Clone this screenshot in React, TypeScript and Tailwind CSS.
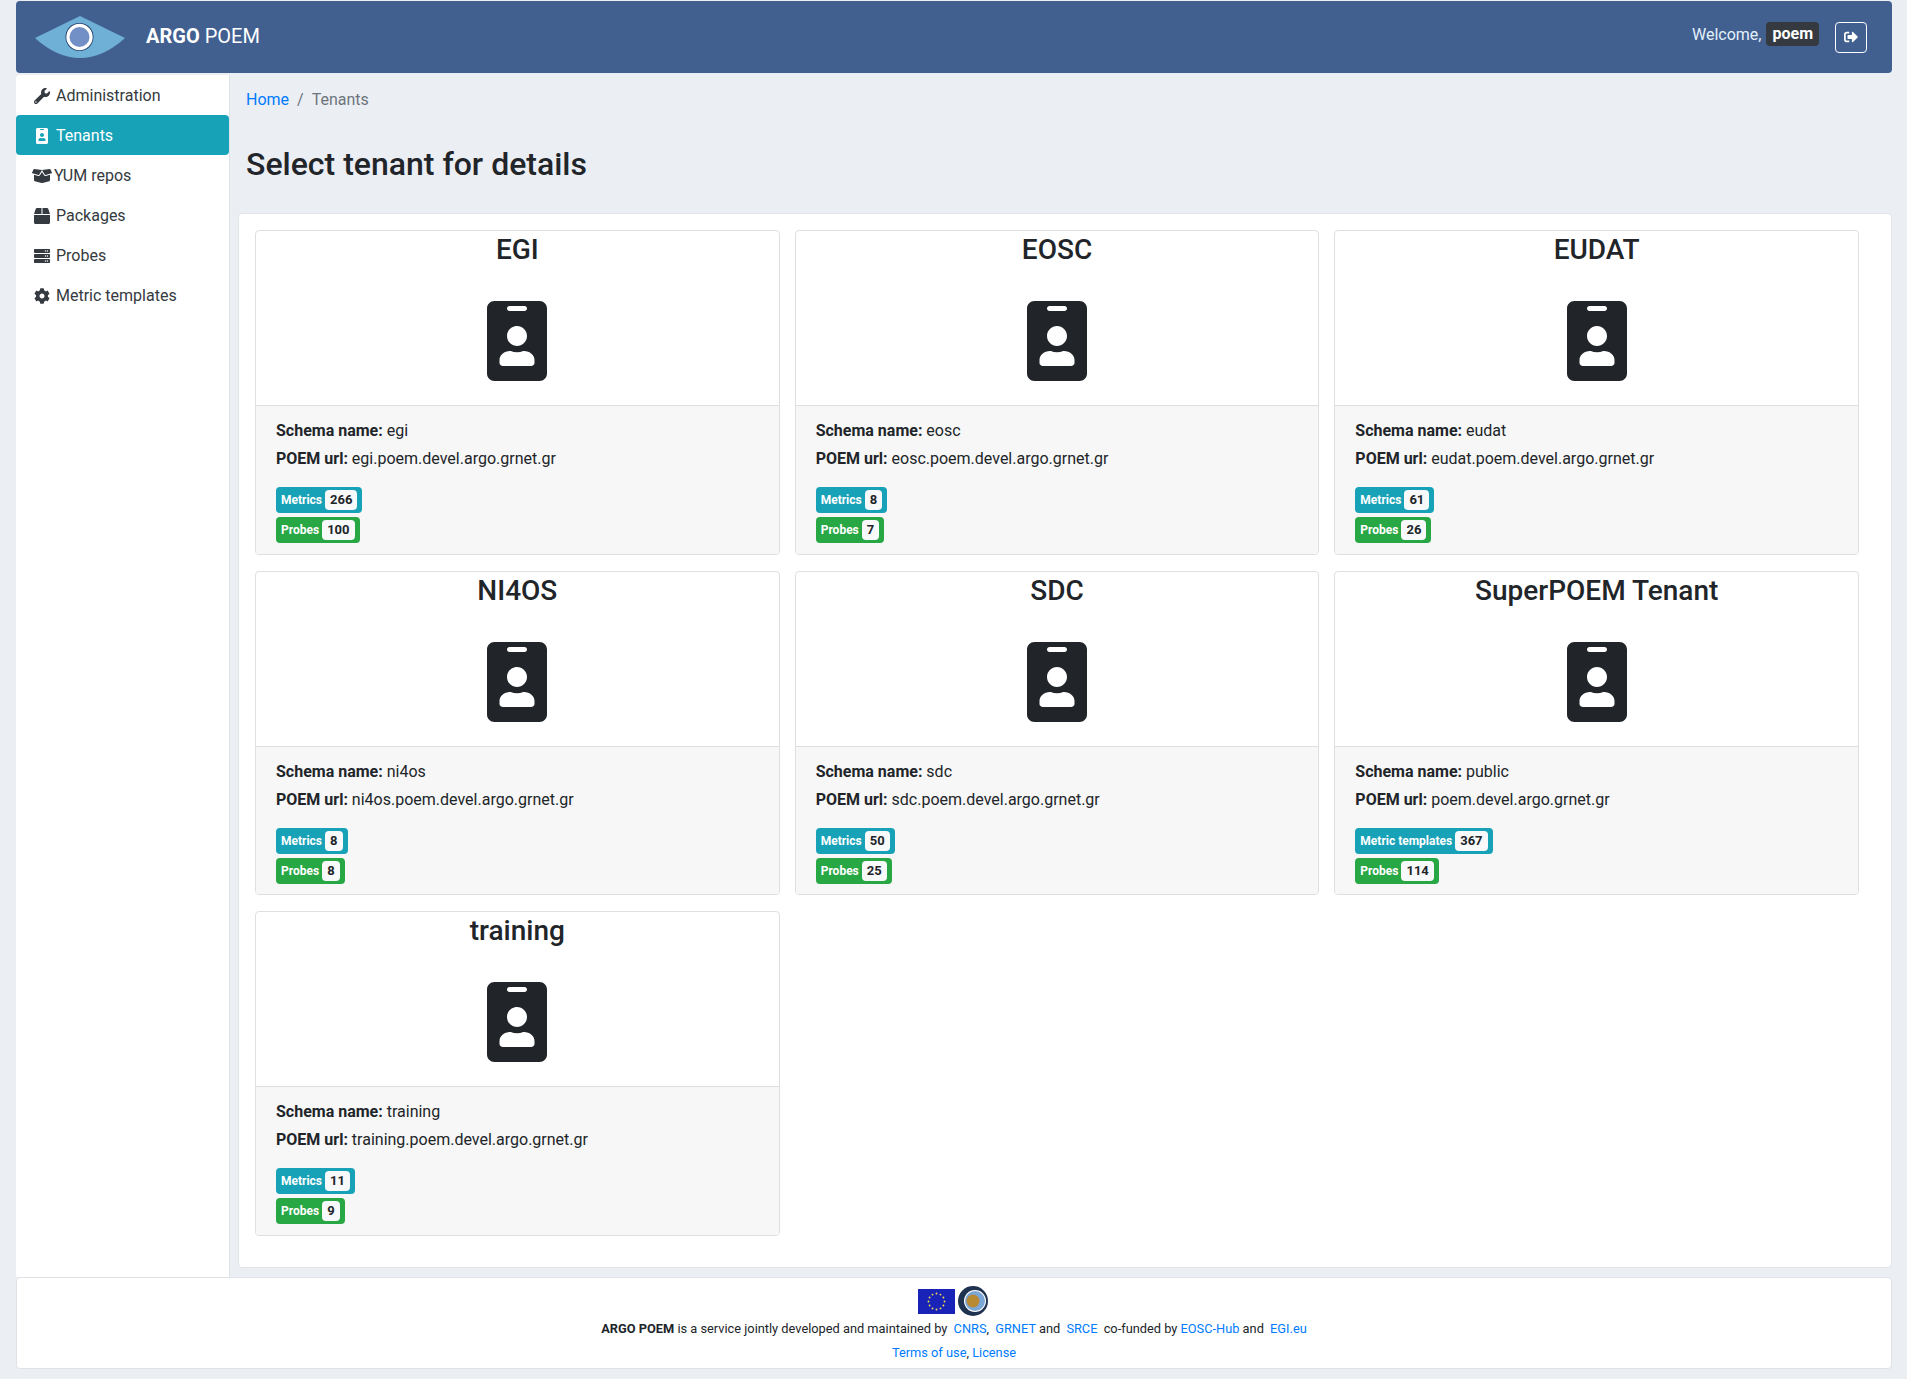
import React from 'react';
import { FaWrench, FaIdBadge, FaBoxOpen, FaBox, FaServer, FaCog, FaSignOutAlt } from 'react-icons/fa';

const navItems = [
  { label: 'Administration', icon: <FaWrench className="w-4 h-4" />, wide: false },
  { label: 'Tenants', icon: <FaIdBadge className="w-4 h-4" />, wide: false, active: true },
  { label: 'YUM repos', icon: <FaBoxOpen className="w-5 h-4" />, wide: true },
  { label: 'Packages', icon: <FaBox className="w-4 h-4" />, wide: false },
  { label: 'Probes', icon: <FaServer className="w-4 h-4" />, wide: false },
  { label: 'Metric templates', icon: <FaCog className="w-4 h-4" />, wide: false },
];

const tenants = [
  { name: 'EGI', schema: 'egi', url: 'egi.poem.devel.argo.grnet.gr', metrics: 266, probes: 100 },
  { name: 'EOSC', schema: 'eosc', url: 'eosc.poem.devel.argo.grnet.gr', metrics: 8, probes: 7 },
  { name: 'EUDAT', schema: 'eudat', url: 'eudat.poem.devel.argo.grnet.gr', metrics: 61, probes: 26 },
  { name: 'NI4OS', schema: 'ni4os', url: 'ni4os.poem.devel.argo.grnet.gr', metrics: 8, probes: 8 },
  { name: 'SDC', schema: 'sdc', url: 'sdc.poem.devel.argo.grnet.gr', metrics: 50, probes: 25 },
  { name: 'SuperPOEM Tenant', schema: 'public', url: 'poem.devel.argo.grnet.gr', metrics: 367, probes: 114, metricLabel: 'Metric templates' },
  { name: 'training', schema: 'training', url: 'training.poem.devel.argo.grnet.gr', metrics: 11, probes: 9 },
];

const Logo = () => (
  <svg width="90" height="42" viewBox="0 0 90 42" className="shrink-0">
    <path d="M0 22 L45 0 L90 22 Q68 42 45 42 Q22 42 0 22 Z" fill="#6fb0d6" />
    <circle cx="44.5" cy="21" r="14" fill="#1f3a66" />
    <circle cx="44.5" cy="21" r="13.2" fill="#ffffff" />
    <circle cx="44.5" cy="21" r="10" fill="#7390c6" />
  </svg>
);

const Badge = ({ label, value, color }: { label: string; value: number; color: string }) => (
  <span className={`inline-flex items-center h-[26px] rounded-[4px] px-[5px] text-[12px] font-bold text-white ${color}`}>
    {label}
    <span className="ml-[3px] inline-flex items-center h-5 rounded-[4px] bg-[#f8f9fa] px-[5px] text-[13px] text-[#212529]">{value}</span>
  </span>
);

const TenantCard = ({ t }: { t: (typeof tenants)[number] }) => (
  <div className="flex flex-col rounded-[4px] border border-[#dfdfdf] bg-white overflow-hidden">
    <div className="h-[175px] flex flex-col items-center border-b border-[#dfdfdf]">
      <h3 className="mt-[2px] text-[28px] leading-[34px] font-medium text-[#212529]">{t.name}</h3>
      <FaIdBadge className="mt-[34px] w-[60px] h-[80px] text-[#212529]" />
    </div>
    <div className="bg-[#f7f7f7] h-[147.5px] pt-[13px] px-5 text-[#212529]">
      <p className="leading-6"><b className="font-bold">Schema name:</b> {t.schema}</p>
      <p className="leading-6 mt-1"><b className="font-bold">POEM url:</b> {t.url}</p>
      <div className="mt-4 flex flex-col items-start gap-1">
        <Badge label={t.metricLabel ?? 'Metrics'} value={t.metrics} color="bg-[#17a2b8]" />
        <Badge label="Probes" value={t.probes} color="bg-[#28a745]" />
      </div>
    </div>
  </div>
);

export default function App() {
  return (
    <div className="min-h-[1379px] bg-[#ebeef3] pt-px pl-4 pr-[15px] font-[Roboto,sans-serif] text-base text-[#212529]">
      {/* Header */}
      <div className="h-[72px] bg-[#416090] rounded-[4px] flex items-center justify-between pl-[19px] pr-[25px]">
        <div className="flex items-center">
          <Logo />
          <span className="ml-[21px] -mt-[2px] text-[20px] text-white"><span className="font-bold">ARGO</span> POEM</span>
        </div>
        <div className="flex items-start">
          <span className="text-[#e3f0fb] mr-[5px] pt-px leading-6">Welcome,</span>
          <span className="h-6 rounded-[4px] bg-[#343a40] px-[6px] flex items-center font-bold text-white">poem</span>
          <button className="ml-4 w-8 h-[31px] rounded-[4px] border border-white flex items-center justify-center text-white">
            <FaSignOutAlt className="w-[14px] h-[14px]" />
          </button>
        </div>
      </div>

      <div className="flex mt-[2px]">
        {/* Sidebar */}
        <div className="w-[214px] shrink-0 bg-white rounded-tl-[4px] border-r border-[#dfe2e6] h-[1202px]">
          {navItems.map((n) => (
            <div
              key={n.label}
              className={`h-10 pt-[2px] flex items-center rounded-[4px] ${n.wide ? 'pl-4 gap-[2px]' : 'pl-[18px] gap-[6px]'} ${n.active ? 'bg-[#17a2b8] text-white' : 'text-[#343a40]'}`}
            >
              {n.icon}
              <span>{n.label}</span>
            </div>
          ))}
        </div>

        {/* Main */}
        <div className="flex-1 pl-2">
          <div className="pl-2 pt-[13px] h-[43px] leading-6">
            <span className="text-[#007bff]">Home</span>
            <span className="text-[#6c757d] mx-2">/</span>
            <span className="text-[#6c757d]">Tenants</span>
          </div>
          <h2 className="pl-2 mt-[27px] text-[32px] leading-[38px] font-medium text-[#212529]">Select tenant for details</h2>
          <div className="mt-[30px] bg-white rounded-[4px] border border-[#e1e4e8] pt-4 pl-4 pr-[32px] pb-8 h-[1055px]">
            <div className="grid grid-cols-3 gap-x-[15px] gap-y-4">
              {tenants.map((t) => (
                <TenantCard key={t.name} t={t} />
              ))}
            </div>
          </div>
        </div>
      </div>

      {/* Footer */}
      <div className="h-[92px] bg-white rounded-[4px] border border-[#dfe2e6] flex flex-col items-center text-[12.8px]">
        <div className="mt-2 -ml-[2px] flex items-center gap-[3px] h-[30px]">
          <svg width="37" height="25" viewBox="0 0 37 25">
            <rect width="37" height="25" fill="#1a23b8" />
            {[0, 1, 2, 3, 4, 5, 6, 7, 8, 9, 10, 11].map((i) => (
              <circle
                key={i}
                cx={18.5 + 8 * Math.sin((i * Math.PI) / 6)}
                cy={12.5 - 8 * Math.cos((i * Math.PI) / 6)}
                r="0.9"
                fill="#f5e04a"
              />
            ))}
          </svg>
          <svg width="30" height="30" viewBox="0 0 30 30">
            <circle cx="15" cy="15" r="15" fill="#1f3350" />
            <circle cx="17" cy="15" r="11" fill="#ffffff" />
            <circle cx="17" cy="15" r="10" fill="#7aa6d8" />
            <circle cx="15" cy="15" r="6.5" fill="#b98a34" />
          </svg>
        </div>
        <p className="mt-1 leading-[18px] text-[#212529]">
          <b className="font-bold">ARGO POEM</b> is a service jointly developed and maintained by{' '}
          <span className="text-[#007bff] ml-[3px]">CNRS</span>, <span className="text-[#007bff] ml-[3px]">GRNET</span> and{' '}
          <span className="text-[#007bff] ml-[3px]">SRCE</span> <span className="ml-[3px]">co-funded by</span>{' '}
          <span className="text-[#007bff]">EOSC-Hub</span> and <span className="text-[#007bff] ml-[3px]">EGI.eu</span>
        </p>
        <p className="mt-[6px] leading-[18px]">
          <span className="text-[#007bff]">Terms of use</span>, <span className="text-[#007bff]">License</span>
        </p>
      </div>
    </div>
  );
}
